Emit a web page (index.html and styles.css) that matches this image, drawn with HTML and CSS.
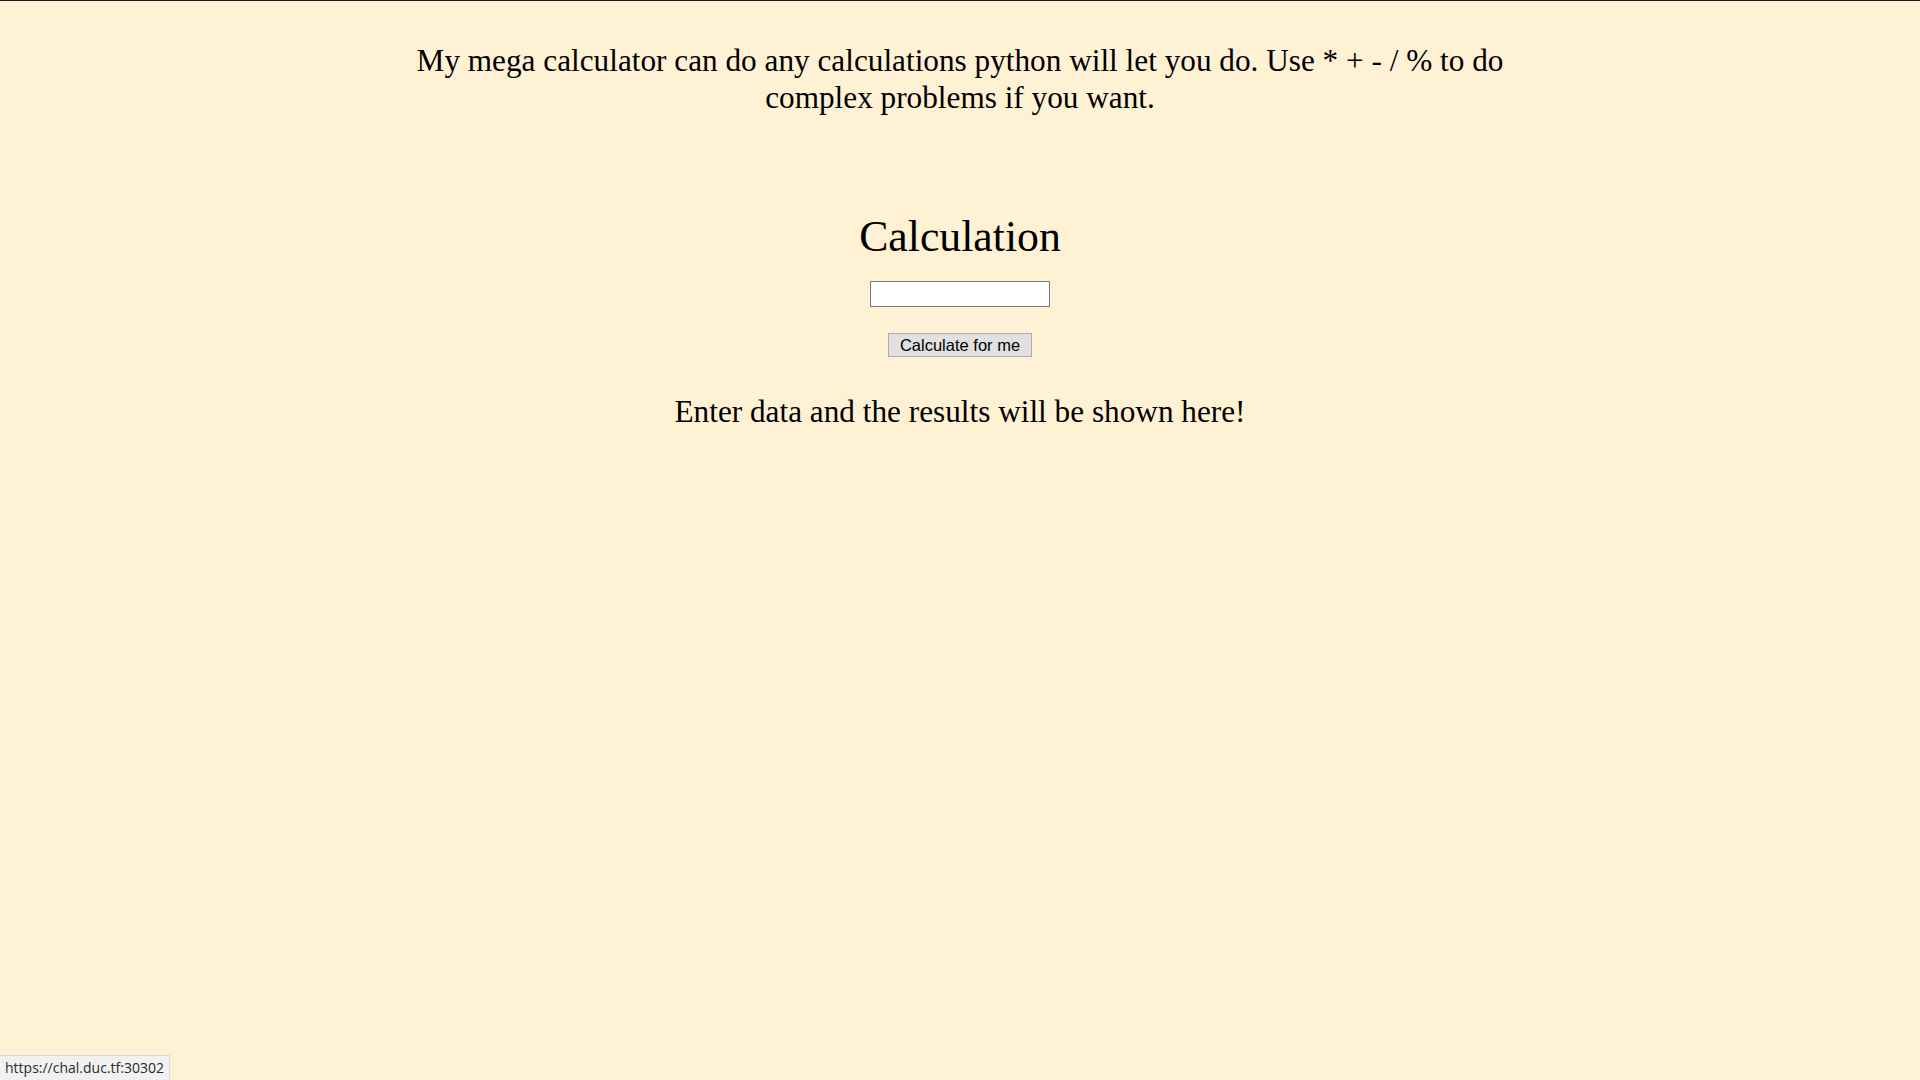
FILE: index.html
```html
<!DOCTYPE html>
<html lang="en">
<head>
<meta charset="utf-8">
<title>Mega Calculator</title>
<link rel="stylesheet" href="styles.css">
</head>
<body>
<div class="page">
  <p class="intro">My mega calculator can do any calculations python will let you do. Use * + - / % to do complex problems if you want.</p>
  <form class="calc" onsubmit="return false;">
    <h2 class="calc-title">Calculation</h2>
    <input class="calc-input" type="text" name="calc">
    <button class="calc-button" type="submit">Calculate for me</button>
  </form>
  <p class="result">Enter data and the results will be shown here!</p>
</div>
<div class="status">https://chal.duc.tf:30302</div>
</body>
</html>
```

FILE: styles.css
```css
html, body {
  margin: 0;
  padding: 0;
  height: 100%;
}
body {
  background: #fff1d4;
  border-top: 1px solid #1a1a1a;
  box-sizing: border-box;
  font-family: "Liberation Serif", "Times New Roman", serif;
  color: #000;
}
.page {
  display: flex;
  flex-direction: column;
  align-items: center;
  text-align: center;
}
.intro {
  max-width: 1140px;
  margin: 41px 0 0 0;
  font-size: 31.25px;
  line-height: 37px;
}
.calc {
  display: flex;
  flex-direction: column;
  align-items: center;
  margin-top: 95px;
}
.calc-title {
  margin: 0;
  font-weight: normal;
  font-size: 43.75px;
  line-height: 50px;
}
.calc-input {
  margin-top: 20px;
  width: 180px;
  height: 26px;
  box-sizing: border-box;
  border: 1px solid #7a7a7a;
  background: #fff;
  padding: 2px 3px;
  font-size: 16px;
}
.calc-button {
  margin-top: 26px;
  width: 144px;
  height: 24px;
  box-sizing: border-box;
  border: 1px solid #adadad;
  background: #e1e1e1;
  color: #000;
  padding: 0;
  font-family: "Liberation Sans", Arial, sans-serif;
  font-size: 16.5px;
  line-height: 22px;
}
.result {
  margin: 37px 0 0 0;
  font-size: 31.25px;
  line-height: 36px;
}
.status {
  position: fixed;
  left: 0;
  bottom: 0;
  height: 25px;
  box-sizing: border-box;
  padding: 0 5px 0 5px;
  background: #f1f1f1;
  border-top: 1px solid #dadada;
  border-right: 1px solid #dadada;
  font-family: "Open Sans", "Noto Sans", sans-serif;
  font-size: 14px;
  line-height: 24px;
  color: #2b2b2b;
}
```
